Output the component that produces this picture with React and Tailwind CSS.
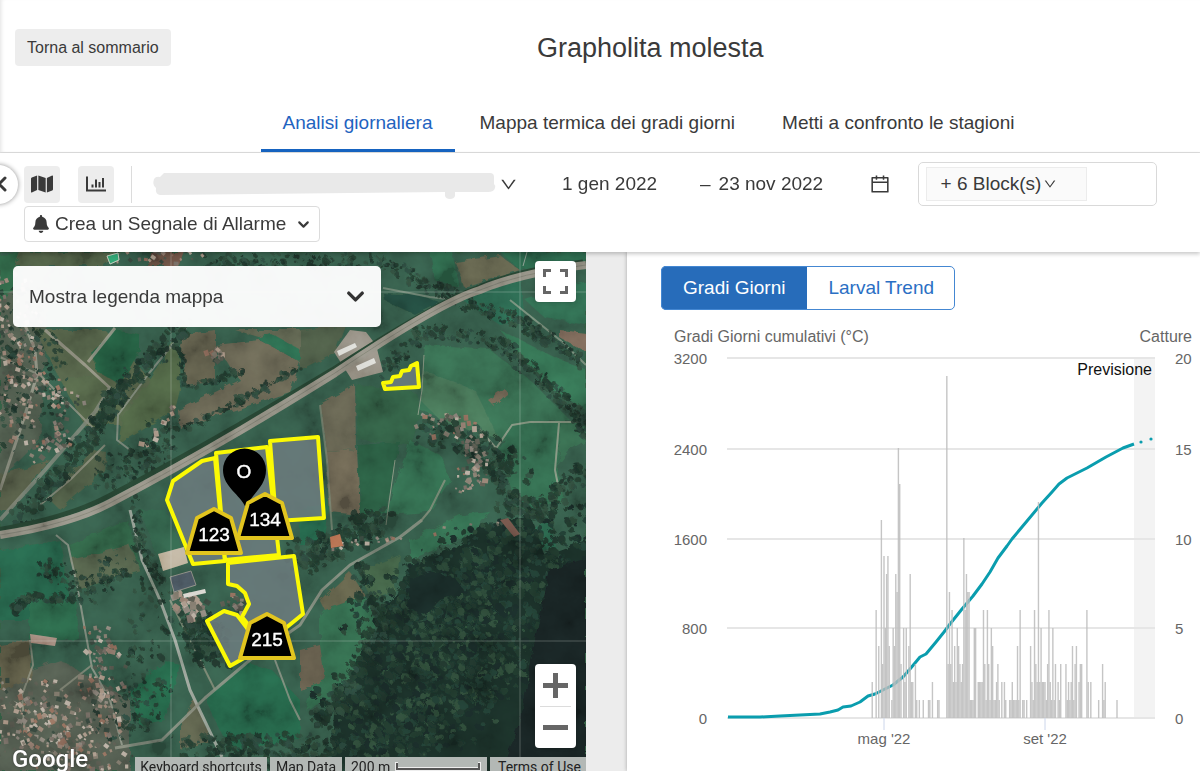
import { useState } from 'react'
import { AiOutlineCalendar, AiOutlineDown } from 'react-icons/ai'
import { FaBell, FaMap } from 'react-icons/fa'
import { ChevronDown, ChevronLeft } from 'lucide-react'

// small seeded generator so the scattered trees and roofs stay put between renders
function random(seed) {
  let s = seed
  return () => {
    s = (s * 16807) % 2147483647
    return s / 2147483647
  }
}

// items spread along a polyline, at most `spread` away from it
function scatter(seed, count, line, spread, min, max, colors) {
  const rnd = random(seed)
  return Array.from({ length: count }, () => {
    const t = rnd() * (line.length - 1)
    const i = Math.min(Math.floor(t), line.length - 2)
    const f = t - i
    return {
      x: line[i][0] + (line[i + 1][0] - line[i][0]) * f + (rnd() - 0.5) * 2 * spread,
      y: line[i][1] + (line[i + 1][1] - line[i][1]) * f + (rnd() - 0.5) * 2 * spread,
      r: min + rnd() * (max - min),
      a: rnd() * 90,
      color: colors[Math.floor(rnd() * colors.length)],
    }
  })
}

const TREE = ['#1c3a2c', '#20392d', '#27453a', '#182f26', '#2c4a38']
const ROOF = ['#93796a', '#857d72', '#a8917f', '#6f665c', '#b5a797', '#8d6653', '#55564b', '#33453a', '#7c7466', '#4b5246']

const FIELDS = [
  ['#4d5d40', '35,330 105,330 165,395 150,425 60,380'],
  ['#1f5c3c', '92,352 115,330 140,335 140,350 120,385 95,370'],
  ['#4d6140', '60,380 100,375 150,425 85,425'],
  ['#48603e', '178,335 180,390 175,410 118,445 122,420'],
  ['#5d5a45', '180,335 215,330 215,382 185,385'],
  ['#645f4c', '215,345 260,340 300,362 290,392 180,428 178,410 240,380'],
  ['#5a5f48', '235,330 300,330 300,362 262,338'],
  ['#24694a', '257,338 270,333 300,350 300,362'],
  ['#4c5a40', '50,500 92,450 106,452 104,470 60,510'],
  ['#4f593f', '0,475 50,460 10,510 0,510'],
  ['#28623f', '0,255 28,252 20,290 0,300'],
  ['#4c5d40', '20,252 120,252 100,266 15,266'],
  ['#6d4f40', '150,252 185,252 180,266 148,266'],
  ['#47583f', '300,330 345,325 335,352 300,370'],
  ['#1f6244', '0,550 60,540 70,600 30,620 0,620'],
  ['#2a6343', '70,545 128,520 140,570 80,590'],
  ['#4f5f45', '70,560 130,545 140,570 78,590'],
  ['#246645', '30,600 75,600 80,640 30,640'],
  ['#5b5a43', '0,645 30,640 32,680 0,690'],
  ['#1f6645', '130,690 165,660 180,665 165,720 140,725'],
  ['#2a5f44', '165,510 190,565 160,565 140,510'],
  ['#1f6545', '205,700 245,662 272,670 300,700 300,740 230,750'],
  ['#595c44', '180,725 195,700 212,740 180,750'],
  ['#1f6647', '300,510 330,500 325,540 300,545'],
  ['#5f5d48', '320,404 355,385 356,450 326,452'],
  ['#68604c', '326,452 357,450 360,515 330,512'],
  ['#2b5d40', '356,385 415,392 420,410 410,445 358,440'],
  ['#235a3e', '358,445 400,442 385,515 360,513'],
  ['#2b6a49', '385,515 410,440 440,455 450,480 430,512'],
  ['#2d6a4b', '420,400 425,345 490,350 530,380 580,430 575,420 550,420 500,440 420,410'],
  ['#3c6f50', '420,400 422,370 475,390 500,440 440,420'],
  ['#2c6848', '497,450 512,425 560,420 557,470 565,500 520,515 505,470'],
  ['#2f684a', '560,422 586,422 586,440 570,450 558,465'],
  ['#2b6c4b', '500,330 560,360 586,370 586,410 545,385'],
  ['#22644a', '455,295 520,277 525,320 500,325'],
  ['#27694b', '525,300 586,280 586,325 545,318'],
  ['#75614f', '560,330 586,333 586,352 560,338'],
  ['#266a4a', '430,252 452,252 460,288 435,280'],
  ['#5e5e46', '455,262 500,255 520,270 465,288'],
  ['#206546', '500,252 586,252 586,262 520,270'],
  ['#1f4a3a', '383,293 420,295 440,303 415,315 384,300'],
  ['#70634f', '488,400 504,388 508,393 494,406'],
  ['#2a6747', '320,615 345,580 370,600 375,620 350,690 305,710 320,660'],
  ['#5d5b43', '320,600 350,572 365,595 325,610'],
  ['#3c6243', '360,570 400,555 395,590 370,600'],
  ['#615945', '300,650 320,645 325,680 300,690'],
  ['#2a6a49', '410,540 460,515 490,512 470,535 410,560'],
  ['#24664a', '525,530 550,520 557,550 545,552'],
]

const ROADS = [
  [3, '#8e8e80', '25,325 35,350 37,375 25,415 10,460 0,490'],
  [3, '#928f80', '45,330 85,365 110,388'],
  [3, '#928f80', '88,362 115,328'],
  [2, '#868878', '0,357 40,375 70,405 95,430'],
  [2, '#80887a', '186,328 150,372 118,415 117,440 130,450'],
  [4, '#777c6e', '110,388 95,412 45,470 0,520'],
  [2, '#848474', '105,445 70,480 40,505'],
  [2, '#8a9081', '56,535 68,545 78,590 85,630 92,668 110,700 122,745'],
  [3, '#aaaea3', '130,510 142,560 160,600 175,640 190,690 222,757'],
  [2, '#7e846f', '170,600 205,670 215,690'],
  [3, '#868a7b', '115,748 162,740 205,698 250,660 300,625 322,590 350,565 400,537 422,520'],
  [2, '#838674', '30,640 33,665 22,695 25,735'],
  [2, '#7e8170', '92,665 60,690'],
  [2, '#8f9781', '495,450 512,425 530,422 586,422'],
  [2, '#8f9781', '478,428 496,448'],
  [2, '#8f9781', '559,423 555,470 560,495'],
  [1, '#8c957f', '424,355 422,390 418,415'],
  [1, '#8c957f', '395,460 388,510 386,525'],
  [2, '#7c8570', '445,480 430,510 420,522'],
  [2, '#6f7c68', '320,405 327,460 332,530'],
  [2, '#6f8270', '383,288 430,297 455,300'],
  [1, '#9ba598', '527,252 523,266'],
  [2, '#7d8f7a', '510,300 560,340 586,365'],
  [2, '#848b7b', '275,660 290,700 300,720'],
]

const TREES = [
  ...scatter(11, 330, [[20, 520], [95, 430], [125, 385], [185, 325]], 9, 1, 4, TREE),
  ...scatter(12, 90, [[185, 430], [250, 395], [300, 368]], 3, 1, 3, TREE),
  ...scatter(13, 130, [[100, 475], [150, 460], [165, 430]], 16, 1, 3, TREE),
  ...scatter(14, 260, [[390, 265], [455, 298], [520, 322], [586, 362]], 7, 1, 3, TREE),
  ...scatter(15, 320, [[385, 372], [425, 330], [500, 342], [530, 370], [575, 410], [586, 435]], 7, 1, 3, TREE),
  ...scatter(16, 80, [[15, 610], [30, 597], [72, 600]], 3, 2, 4, TREE),
  ...scatter(17, 120, [[45, 565], [85, 595], [120, 565]], 13, 1, 3, TREE),
  ...scatter(18, 200, [[300, 560], [335, 540], [380, 520]], 15, 1, 4, TREE),
  ...scatter(19, 220, [[195, 625], [215, 650]], 17, 1, 4, TREE),
  ...scatter(20, 200, [[360, 570], [385, 620], [345, 690], [320, 720]], 10, 1, 4, TREE),
  ...scatter(21, 180, [[490, 455], [510, 500], [540, 510], [586, 470]], 10, 1, 4, TREE),
  ...scatter(22, 220, [[185, 750], [330, 750]], 16, 1, 4, TREE),
  ...scatter(23, 160, [[150, 580], [150, 700], [110, 720]], 22, 1, 3, TREE),
  ...scatter(24, 180, [[0, 300], [40, 350], [30, 430]], 30, 1, 3, TREE),
  ...scatter(25, 130, [[205, 262], [285, 262], [380, 262]], 8, 1, 3, TREE),
  ...scatter(26, 70, [[180, 350], [182, 385], [215, 382], [240, 370]], 3, 1, 3, TREE),
  ...scatter(27, 90, [[130, 460], [138, 540], [160, 580]], 6, 1, 3, TREE),
  ...scatter(28, 120, [[425, 430], [470, 440], [520, 470]], 14, 1, 4, TREE),
]

const HOUSES = [
  ...scatter(31, 190, [[8, 290], [18, 350], [10, 420]], 24, 2, 5, ROOF),
  ...scatter(32, 40, [[45, 380], [75, 410]], 12, 2, 5, ROOF),
  ...scatter(33, 40, [[38, 450], [60, 430]], 12, 2, 6, ROOF),
  ...scatter(34, 360, [[0, 715], [50, 715], [100, 750]], 38, 2, 6, ROOF),
  ...scatter(35, 90, [[95, 630], [110, 660], [90, 690], [130, 700]], 16, 2, 6, ROOF),
  ...scatter(36, 95, [[425, 425], [465, 425], [480, 460], [465, 485]], 13, 2, 6, ROOF),
  ...scatter(37, 30, [[180, 595], [205, 610]], 10, 3, 8, ROOF),
  ...scatter(38, 24, [[230, 600], [240, 605]], 8, 2, 6, ROOF),
  ...scatter(39, 16, [[212, 350], [224, 355]], 6, 3, 6, ROOF),
  ...scatter(40, 30, [[120, 255], [200, 255]], 8, 2, 5, ROOF),
  ...scatter(41, 14, [[175, 405], [142, 442]], 5, 3, 6, ROOF),
  ...scatter(42, 24, [[400, 535], [330, 545], [505, 520]], 4, 2, 5, ROOF),
]

const FOREST = '330,771 335,700 370,640 385,605 400,590 410,565 460,545 480,525 530,515 545,555 586,540 586,771'
const CANOPY = [
  ...scatter(51, 900, [[380, 640], [470, 580], [560, 540]], 42, 1, 4, ['#1a342a', '#1f3d33', '#152b26', '#254433', '#1b382c']),
  ...scatter(52, 1000, [[350, 740], [440, 690], [530, 620]], 48, 1, 4, ['#1a342a', '#1f3d30', '#142a26', '#294a34', '#1b382c']),
]

const BLOCKS = [
  '167,500 173,481 202,461 215,458 219,500 225,561 193,564',
  '216,453 267,447 279,555 225,560',
  '270,441 318,437 324,518 276,521',
  '228,563 294,556 303,614 287,627 265,645 242,617 249,604 245,593 237,586 228,584',
  '207,621 224,611 237,615 247,628 258,650 230,666',
  '383,383 391,382 393,377 400,376 402,371 409,370 411,366 417,363 419,387 385,389',
]

const TRAPS = [
  { x: 214, y: 509, label: '123' },
  { x: 265, y: 494, label: '134' },
  { x: 267, y: 614, label: '215' },
]

function SatelliteMap() {
  return (
    <svg viewBox="0 252 586 519" preserveAspectRatio="xMinYMin slice" className="block h-full w-full" role="img" aria-label="Mappa satellitare">
      <defs>
        <filter id="rough" x="0" y="0" width="100%" height="100%">
          <feTurbulence type="fractalNoise" baseFrequency="0.09" numOctaves="3" seed="4" />
          <feDisplacementMap in="SourceGraphic" scale="7" />
        </filter>
        <filter id="grain" x="0" y="0" width="100%" height="100%">
          <feTurbulence type="fractalNoise" baseFrequency="0.03" numOctaves="5" seed="8" />
          <feColorMatrix values="1.6 0 0 0 -0.35  1.6 0 0 0 -0.35  1.6 0 0 0 -0.35  0 0 0 0 1" />
        </filter>
      </defs>
      <rect x="0" y="252" width="586" height="519" fill="#30573f" />
      <g className="saturate-[0.85]">
        <g filter="url(#rough)">
          <rect x="0" y="252" width="586" height="519" fill="#2f5a44" />
          <polygon points="0,266 50,266 40,440 0,480" fill="#4b5a48" />
          <polygon points="0,680 60,660 130,700 130,771 0,771" fill="#4d5848" />
          {FIELDS.map(([fill, points]) => <polygon key={points} points={points} fill={fill} />)}
          <polygon points={FOREST} fill="#182f28" />
          {CANOPY.map((c, i) => <circle key={i} cx={c.x} cy={c.y} r={c.r} fill={c.color} />)}
          <polygon points="410,580 430,572 455,578 465,592 440,600 425,615 408,608" fill="#162b27" />
          <polygon points="550,570 586,560 586,771 500,771 520,725 535,640" fill="#142022" />
        </g>
        {ROADS.map(([width, stroke, points]) => (
          <polyline key={points} points={points} fill="none" stroke={stroke} strokeWidth={width} strokeLinejoin="round" opacity="0.8" />
        ))}
        <g filter="url(#rough)">
          {TREES.map((c, i) => <circle key={i} cx={c.x} cy={c.y} r={c.r} fill={c.color} opacity="0.85" />)}
        </g>
        {HOUSES.map((h, i) => (
          <rect key={i} x={h.x} y={h.y} width={h.r} height={h.r * 0.8} fill={h.color} transform={`rotate(${h.a} ${h.x} ${h.y})`} />
        ))}
      </g>

      {/* motorway and the service areas next to it */}
      <path d="M334 352 L350 330 L366 332 L376 345 L383 372 L352 380 Z" fill="#8d877b" />
      <path d="M0 540 Q70 528 110 507 Q210 455 335 380 Q440 312 480 298 Q520 280 586 272" fill="none" stroke="#24402f" strokeWidth="5" transform="translate(-3 -10)" />
      <path d="M0 535 Q70 524 110 503 Q210 451 335 373 Q440 302 480 290 Q520 273 586 265" fill="none" stroke="#8a877b" strokeWidth="8" />
      <path d="M0 535 Q70 524 110 503 Q210 451 335 373 Q440 302 480 290 Q520 273 586 265" fill="none" stroke="#74756a" strokeWidth="1" />
      <path d="M337 351 l18 -8 2 4 -18 9z M356 366 l18 -8 2 5 -18 8z" fill="#dcdcd6" />

      {/* buildings by the blocks */}
      <polygon points="158,554 184,547 188,563 163,571" fill="#b9ac95" />
      <polygon points="170,577 191,571 196,585 174,592" fill="#4c5963" stroke="#8d8d85" />
      <polygon points="183,594 205,589 206,593 184,598" fill="#d9d6cf" />
      <polygon points="330,537 340,534 343,546 331,548" fill="#b0694c" />
      <polygon points="30,634 57,638 55,646 31,643" fill="#a58d80" />
      <polygon points="107,256 118,253 119,260 110,264" fill="#2c9a68" stroke="#b9c7b4" />
      <path d="M500 520 L508 518 L520 534 L514 537 Z" fill="#6d5046" />

      <rect x="0" y="252" width="586" height="519" filter="url(#grain)" opacity="0.2" className="mix-blend-overlay" />
      <path d="M171 252V771M520 252V771M0 292H586M0 641H586" stroke="#dfe8e2" strokeWidth="1" opacity="0.28" />

      {BLOCKS.map((points) => (
        <polygon key={points} points={points} fill="#6d7c7f" fillOpacity="0.85" stroke="#fbf904" strokeWidth="4" strokeLinejoin="round" />
      ))}
      <path d="M246 508 C240 494 223 487 223 470 A21 21 0 0 1 266 470 C266 487 251 494 246 508 Z" fill="#000" />
      <text x="244" y="478" textAnchor="middle" fill="#fff" stroke="#fff" strokeWidth="0.4" className="font-['Liberation_Sans'] text-[19px]">O</text>
      {TRAPS.map((t) => (
        <g key={t.label}>
          <path d={`M${t.x} ${t.y} l17 9 10 35 h-54 l10 -35 z`} fill="#000" stroke="#e2c51f" strokeWidth="4" strokeLinejoin="round" />
          <text x={t.x} y={t.y + 32} textAnchor="middle" fill="#fff" stroke="#fff" strokeWidth="0.4" className="font-['Liberation_Sans'] text-[19px]">{t.label}</text>
        </g>
      ))}
    </svg>
  )
}

// captures per day, day 0 is the 1st of May
const CAPTURES = [
  [-9, 2], [-6, 6], [-4, 4], [-2, 11], [-1, 3], [0, 9], [1, 5], [2, 8], [3, 9], [4, 4], [6, 1], [7, 5], [8, 4], [9, 8],
  [10, 7], [11, 15], [12, 13], [13, 3], [15, 5], [16, 2], [17, 5], [19, 4], [20, 8], [21, 2], [22, 2], [24, 3], [25, 1],
  [27, 1], [30, 1], [34, 1], [35, 1], [37, 2], [41, 1], [42, 1], [48, 19], [49, 3], [50, 7], [51, 3], [52, 6], [53, 2],
  [54, 4], [55, 2], [56, 5], [57, 4], [58, 3], [59, 2], [60, 3], [61, 10], [62, 6], [63, 8], [64, 7], [65, 7], [66, 1],
  [67, 1], [68, 1], [69, 5], [70, 5], [72, 2], [73, 2], [74, 2], [75, 2], [76, 6], [77, 3], [78, 1], [79, 6], [80, 3],
  [81, 1], [82, 5], [83, 4], [84, 1], [85, 1], [86, 2], [87, 3], [88, 1], [90, 2], [92, 2], [93, 1], [96, 1], [97, 1],
  [98, 2], [99, 1], [100, 1], [101, 1], [102, 4], [103, 1], [104, 6], [106, 1], [107, 1], [109, 1], [112, 4], [113, 2],
  [114, 1], [115, 6], [116, 3], [117, 2], [118, 12], [119, 2], [120, 5], [121, 2], [122, 2], [123, 2], [124, 1],
  [125, 3], [126, 6], [127, 2], [128, 1], [129, 5], [130, 1], [131, 3], [133, 2], [134, 1], [135, 3], [139, 3],
  [140, 1], [141, 2], [142, 1], [143, 2], [144, 4], [145, 1], [146, 3], [147, 4], [149, 2], [150, 3], [151, 3],
  [155, 6], [156, 2], [158, 2], [164, 1], [167, 3], [168, 1], [169, 2], [178, 1],
]

const AXIS = [
  { y: 358, left: '3200', right: '20' },
  { y: 449, left: '2400', right: '15' },
  { y: 539, left: '1600', right: '10' },
  { y: 628, left: '800', right: '5' },
  { y: 718, left: '0', right: '0' },
]

const DEGREE_DAYS = '728,717 760,717 780,716 800,715 820,714 830,712 838,710 843,707 851,706 860,702 868,696 875,694 883,690 893,685 903,677 910,669 920,657 926,654 936,642 944,632 950,624 962,609 973,596 982,584 990,572 998,558 1007,546 1012,539 1027,521 1042,503 1052,492 1059,484 1067,478 1087,468 1106,457 1123,448 1134,444'

function DegreeDaysChart() {
  return (
    <svg viewBox="627 348 573 410" className="block w-full" role="img" aria-label="Gradi giorni cumulativi e catture">
      <rect x="1134" y="358" width="21" height="360" fill="#f3f3f3" />
      {AXIS.map((a) => (
        <g key={a.y} fill="#666" className="font-['Liberation_Sans'] text-[15px]">
          <line x1="727" x2="1155" y1={a.y} y2={a.y} stroke="#e6e6e6" strokeWidth="2" />
          <text x="707" y={a.y + 6} textAnchor="end">{a.left}</text>
          <text x="1175" y={a.y + 6}>{a.right}</text>
        </g>
      ))}
      <path d="M884 718V730M1045 718V730" stroke="#ccd6eb" strokeWidth="1" />
      <polyline points={DEGREE_DAYS} fill="none" stroke="#0a9dae" strokeWidth="3" strokeLinejoin="round" />
      <circle cx="1141" cy="442" r="1.6" fill="#0a9dae" />
      <circle cx="1151" cy="439" r="1.6" fill="#0a9dae" />
      {CAPTURES.map(([day, n]) => (
        <rect key={day} x={883.3 + day * 1.309} y={718 - n * 18} width="1.4" height={n * 18} fill="#bfbfbf" opacity="0.9" />
      ))}
      <g className="font-['Liberation_Sans'] text-[15px]" fill="#666">
        <text x="884" y="744" textAnchor="middle">mag '22</text>
        <text x="1045" y="744" textAnchor="middle">set '22</text>
      </g>
      <text x="1152" y="375" textAnchor="end" fill="#111" className="font-['Liberation_Sans'] text-[16px]">Previsione</text>
    </svg>
  )
}

const TABS = ['Analisi giornaliera', 'Mappa termica dei gradi giorni', 'Metti a confronto le stagioni']

function Header() {
  const [active, setActive] = useState(0)
  return (
    <header className="border-b border-[#dedede] shadow-[inset_4px_0_4px_-3px_rgba(0,0,0,0.12)]">
      <div className="flex h-[95px] items-center pl-[15px] pr-[70px]">
        <button className="h-[37px] rounded bg-[#ededed] px-3 text-base">Torna al sommario</button>
        <h1 className="flex-1 text-center text-[27px] leading-8">Grapholita molesta</h1>
      </div>
      <div role="tablist" className="flex justify-center gap-[3px] pl-[97px]">
        {TABS.map((tab, i) => (
          <button
            key={tab}
            role="tab"
            aria-selected={i === active}
            onClick={() => setActive(i)}
            className={i === active
              ? 'h-[57px] border-b-3 border-[#1663c0] px-[22px] pt-[2px] text-[#1f63c0]'
              : 'h-[57px] border-b-3 border-transparent px-[22px] pt-[2px]'}
          >
            {tab}
          </button>
        ))}
      </div>
    </header>
  )
}

function Toolbar() {
  return (
    <div className="relative z-10 bg-white pt-[9px] pb-[10px] shadow-[0_2px_4px_rgba(0,0,0,0.22)]">
      <div className="flex h-11 items-center">
        <button aria-label="Indietro" className="-ml-[21px] flex size-[39px] items-center justify-end rounded-full bg-white pr-1 shadow-[0_0_5px_rgba(0,0,0,0.45)]">
          <ChevronLeft className="size-6" strokeWidth={3} />
        </button>
        <button aria-label="Mappa" className="ml-[6px] flex h-[37px] w-9 items-center justify-center rounded bg-[#ededed]">
          <FaMap className="size-[22px]" />
        </button>
        <button aria-label="Grafico" className="ml-[18px] flex h-[37px] w-9 items-center justify-center rounded bg-[#ededed]">
          <svg viewBox="0 0 20 16" className="h-4 w-5" fill="none" stroke="currentColor">
            <path d="M1 0.500V14.500H20" strokeWidth="2" />
            <path d="M6.500 11.500V8.500M10 11.500V3.500M13.500 11.500V6M17 11.500V2" strokeWidth="2" />
          </svg>
        </button>
        <div className="ml-[17px] h-[37px] w-px bg-[#dcdcdc]" />
        <button aria-label="Scegli campo" className="ml-5 flex items-center gap-[2px]">
          <svg viewBox="0 0 345 30" className="h-[30px] w-[345px]" fill="#e9e9e9">
            <path d="M12 4 H338 Q342 4 342 8 V15 Q344 17 343 19 Q342 23 336 23 H303 V27 Q302 30 298 30 Q294 30 293 27 V23 L8 26 Q3 25 4 19 Q0 16 2 10 Q4 7 8 8 Z" />
          </svg>
          <AiOutlineDown className="size-[19px]" />
        </button>
        <label className="ml-[44px] flex">
          <span className="sr-only">Data inizio</span>
          <input defaultValue="1 gen 2022" className="h-8 w-[138px] outline-none" />
        </label>
        <label className="flex items-center gap-2">
          <span aria-label="Data fine">–</span>
          <input defaultValue="23 nov 2022" className="h-8 w-[134px] outline-none" />
        </label>
        <button aria-label="Apri calendario" className="ml-4">
          <AiOutlineCalendar className="size-[22px]" />
        </button>
        <div className="ml-[27px] flex h-11 w-[239px] items-center rounded-[5px] border border-[#d9d9d9] pl-[7px]">
          <button className="flex h-[34px] w-[161px] items-center gap-[2px] border border-[#ececec] bg-[#fafafa] pl-[14px]">
            + 6 Block(s)
            <AiOutlineDown className="size-[14px]" />
          </button>
        </div>
      </div>
      <button className="ml-6 flex h-9 items-center rounded border border-[#dcdcdc] bg-white px-[7px]">
        <FaBell className="size-[18px]" />
        <span className="ml-[5px]">Crea un Segnale di Allarme</span>
        <ChevronDown className="ml-[9px] size-[17px]" strokeWidth={3} />
      </button>
    </div>
  )
}

function MapPanel() {
  return (
    <section className="relative overflow-hidden bg-[#2d5b43]">
      <div className="absolute inset-0"><SatelliteMap /></div>
      <button className="absolute left-[13px] top-[14px] flex h-[61px] w-[368px] items-center justify-between rounded-[5px] bg-white/96 pl-4 pr-3">
        Mostra legenda mappa
        <ChevronDown className="size-[27px] text-[#333]" strokeWidth={3} />
      </button>
      <button aria-label="Schermo intero" className="absolute right-[10px] top-[9px] flex size-[41px] items-center justify-center rounded-sm bg-white shadow">
        <svg viewBox="0 0 25 25" className="size-[25px]" fill="none" stroke="#666" strokeWidth="3">
          <path d="M1.500 8V1.500H8M17 1.500H23.500V8M23.500 17V23.500H17M8 23.500H1.500V17" />
        </svg>
      </button>
      <div className="absolute bottom-[23px] right-[10px] flex w-[41px] flex-col items-center rounded-sm bg-white shadow">
        <button aria-label="Zoom avanti" className="flex h-[42px] w-full items-center justify-center">
          <svg viewBox="0 0 25 25" className="size-[25px]" fill="#666"><path d="M10 0h5v10h10v5H15v10h-5V15H0v-5h10z" /></svg>
        </button>
        <div className="h-px w-[31px] bg-[#dcdcdc]" />
        <button aria-label="Zoom indietro" className="flex h-[41px] w-full items-center justify-center">
          <svg viewBox="0 0 25 5" className="h-[5px] w-[25px]" fill="#666"><path d="M0 0h25v5H0z" /></svg>
        </button>
      </div>
      <div className="absolute bottom-0 left-3 font-['Roboto'] text-2xl leading-6 font-medium text-white [text-shadow:0_0_2px_#333]">Google</div>
      <div className="absolute -bottom-[6px] right-0 flex h-5 gap-[3px] font-['Roboto'] text-sm leading-5 text-[#222]">
        <button className="w-[132px] bg-[#b3b8b5]">Keyboard shortcuts</button>
        <button className="w-[72px] bg-[#b3b8b5]">Map Data</button>
        <div className="flex w-[142px] gap-[5px] bg-[#b3b8b5] pl-[6px]">
          200 m
          <svg viewBox="0 0 86 14" className="h-[14px] w-[86px]" fill="none">
            <path d="M1 5V12H85V5" stroke="#eee" strokeWidth="4" />
            <path d="M2 6V12H84V6" stroke="#555" strokeWidth="2" />
          </svg>
        </div>
        <a href="#terms" className="w-[96px] bg-[#b3b8b5] pl-2">Terms of Use</a>
      </div>
    </section>
  )
}

function ChartPanel() {
  const [trend, setTrend] = useState(false)
  const on = 'h-11 bg-[#276cba] px-[22px] text-white'
  const off = 'h-11 bg-white px-[21px] text-[#2a6fc4]'
  return (
    <section className="bg-white pt-[14px] shadow-[0_0_4px_rgba(0,0,0,0.3)]">
      <div className="ml-[34px] flex w-fit overflow-hidden rounded-[5px] outline outline-[#4487d2] -outline-offset-1">
        <button className={trend ? off : on} onClick={() => setTrend(false)}>Gradi Giorni</button>
        <button className={trend ? on : off} onClick={() => setTrend(true)}>Larval Trend</button>
      </div>
      <div className="mt-[17px] mb-px flex justify-between pl-[47px] pr-2 text-base leading-5 text-[#666]">
        <span>Gradi Giorni cumulativi (°C)</span>
        <span>Catture</span>
      </div>
      <DegreeDaysChart />
    </section>
  )
}

function App() {
  return (
    <div className="flex h-screen flex-col overflow-hidden bg-white font-['Liberation_Sans',sans-serif] text-[19px] leading-6 text-[#3a3a3a]">
      <Header />
      <Toolbar />
      <main className="grid flex-1 grid-cols-[minmax(0,586fr)_41px_minmax(0,573fr)] bg-[#ececec]">
        <MapPanel />
        <div />
        <ChartPanel />
      </main>
    </div>
  )
}

export default App
